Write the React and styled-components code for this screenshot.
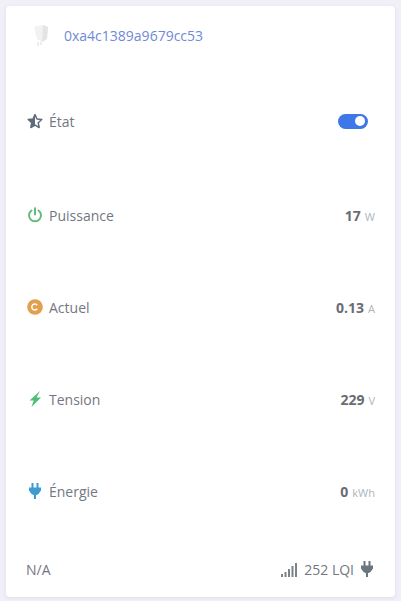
import React from "react";
import styled, { createGlobalStyle } from "styled-components";

const Global = createGlobalStyle`
  html, body { margin: 0; padding: 0; background: #f1f0f9; }
  body { font-family: "Open Sans", "Noto Sans", sans-serif; }
`;

const Page = styled.div`
  width: 401px;
  height: 601px;
  padding: 6px 6px 4px 6px;
  box-sizing: border-box;
  overflow: hidden;
`;

const Card = styled.div`
  width: 389px;
  height: 591px;
  background: #fff;
  border-radius: 4px;
  box-shadow: 0 1px 4px rgba(90, 90, 130, 0.12);
  display: flex;
  flex-direction: column;
  padding: 0 20px;
  box-sizing: border-box;
`;

const Header = styled.div`
  height: 58px;
  display: flex;
  align-items: center;
  gap: 14px;
  padding: 0 0 0 4px;
  flex: none;
`;

const Address = styled.span`
  color: #6f8ad6;
  font-size: 14px;
`;

const Row = styled.div`
  height: ${(p) => p.$h || 92}px;
  flex: none;
  display: flex;
  align-items: center;
  justify-content: space-between;
  padding: ${(p) => (p.$top ? "9px 7px 0 1px" : "0 0 0 1px")};
  box-sizing: border-box;
`;

const Label = styled.div`
  display: flex;
  align-items: center;
  gap: 6px;
  color: #73777f;
  font-size: 14px;
`;

const IconBox = styled.span`
  display: flex;
  width: 16px;
  height: 16px;
  color: ${(p) => p.$color};
`;

const Value = styled.div`
  color: #696c72;
  font-size: 14px;
  font-weight: 700;
`;

const Unit = styled.span`
  color: #adb5bd;
  font-size: 11px;
  font-weight: 400;
  margin-left: 4px;
`;

const Toggle = styled.div`
  width: 30px;
  height: 15px;
  border-radius: 8px;
  background: #3e78e8;
  position: relative;
`;

const Knob = styled.span`
  position: absolute;
  right: 3px;
  top: 2.5px;
  width: 10px;
  height: 10px;
  border-radius: 50%;
  background: #fff;
`;

const Footer = styled.div`
  flex: 1;
  display: flex;
  align-items: center;
  justify-content: space-between;
  color: #73777f;
  font-size: 14px;
  padding-top: 4px;
`;

const FooterRight = styled.div`
  display: flex;
  align-items: center;
  gap: 5px;
`;

const Plug = () => (
  <svg width="16" height="16" viewBox="0 0 16 16" fill="currentColor">
    <path d="M4.500 0h2v4.500h3V0h2v4.500h2.500v3l-2.500 3.500-2 1H9V16H7v-4H6.500l-2-1L2 7.500v-3h2.500z" />
  </svg>
);

export default function App() {
  return (
    <Page>
      <Global />
      <Card>
        <Header>
          <svg width="20" height="26" viewBox="0 0 20 26">
            <path d="M4 5l9-2 5 2-1 12-5 3-5-3z" fill="#f2f2f2" />
            <path d="M13 3l5 2-1 12-5 3z" fill="#e4e4e4" />
            <path d="M8 20v4M11 20v3" stroke="#dcdcdc" strokeWidth="1" />
          </svg>
          <Address>0xa4c1389a9679cc53</Address>
        </Header>
        <Row $h={105} $top>
          <Label>
            <IconBox $color="#5f6b7c">
              <svg width="16" height="16" viewBox="0 0 16 16">
                <path d="M8 1.500l2 4.500 4.800.5-3.600 3.200 1 4.800L8 12.100l-4.200 2.400 1-4.800L1.200 6.500 6 6z" fill="none" stroke="currentColor" strokeWidth="1.500" strokeLinejoin="round" />
                <path d="M8 1.500V12.100l-4.200 2.400 1-4.800L1.200 6.500 6 6z" fill="currentColor" />
              </svg>
            </IconBox>
            État
          </Label>
          <Toggle>
            <Knob />
          </Toggle>
        </Row>
        <Row>
          <Label>
            <IconBox $color="#62bb7c">
              <svg width="16" height="16" viewBox="0 0 16 16" fill="none" stroke="currentColor" strokeWidth="2" strokeLinecap="round">
                <path d="M8 1.200v6.300" />
                <path d="M4.500 3.500a6 6 0 1 0 7 0" />
              </svg>
            </IconBox>
            Puissance
          </Label>
          <Value>17<Unit>W</Unit></Value>
        </Row>
        <Row>
          <Label>
            <IconBox $color="#e0a04d">
              <svg width="16" height="16" viewBox="0 0 16 16">
                <circle cx="8" cy="8" r="7.800" fill="currentColor" />
                <path d="M10.200 6.200a3 3 0 1 0 0 3.600" fill="none" stroke="#fff" strokeWidth="1.500" />
              </svg>
            </IconBox>
            Actuel
          </Label>
          <Value>0.13<Unit>A</Unit></Value>
        </Row>
        <Row>
          <Label>
            <IconBox $color="#4fbd78">
              <svg width="16" height="16" viewBox="0 0 16 16" fill="currentColor">
                <path d="M13 0L2.500 9.500h4.200L4.500 16 14 6.500H9.500L13 0z" />
              </svg>
            </IconBox>
            Tension
          </Label>
          <Value>229<Unit>V</Unit></Value>
        </Row>
        <Row>
          <Label>
            <IconBox $color="#3d9bd1">
              <Plug />
            </IconBox>
            Énergie
          </Label>
          <Value>0<Unit>kWh</Unit></Value>
        </Row>
        <Footer>
          <span>N/A</span>
          <FooterRight>
            <svg width="18" height="15" viewBox="0 0 18 15" fill="#7d8288">
              <rect x="0" y="12" width="2" height="3" />
              <rect x="3.500" y="10" width="2" height="5" />
              <rect x="7" y="7" width="2" height="8" />
              <rect x="10.500" y="4" width="2" height="11" />
              <rect x="14" y="1" width="2" height="14" />
            </svg>
            252 LQI
            <IconBox $color="#6c757d"><Plug /></IconBox>
          </FooterRight>
        </Footer>
      </Card>
    </Page>
  );
}
